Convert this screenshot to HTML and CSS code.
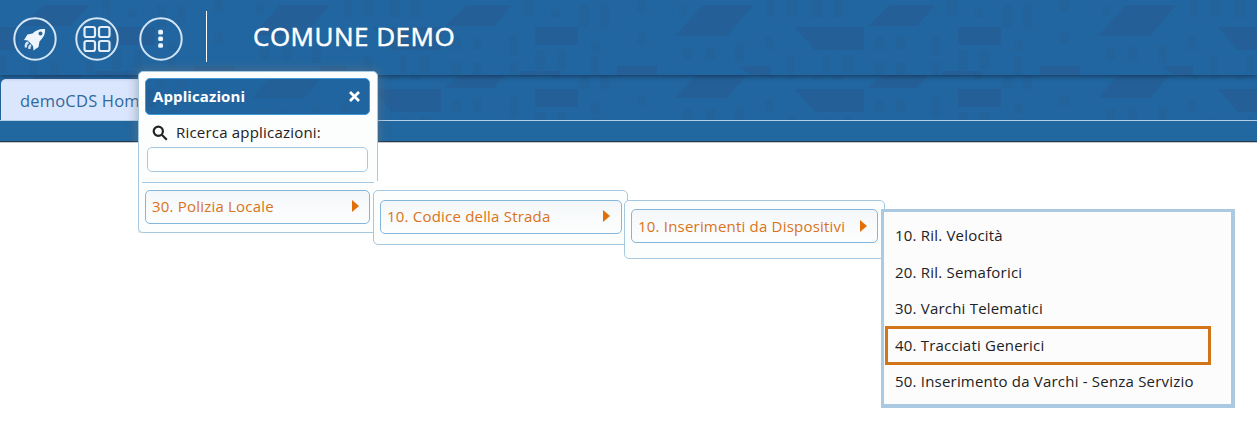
FILE: index.html
```
<!DOCTYPE html>
<html lang="it">
<head>
    <meta charset="UTF-8">
    <meta name="viewport" content="width=device-width, initial-scale=1.0">
    <title>Comune Demo</title>
    <link rel="stylesheet" href="styles.css">
</head>
<body>
    <!-- city pattern shared by the header, the tab bar and the menu title -->
    <svg class="defs" width="0" height="0">
        <defs>
            <g id="city">
                <path d="M675 36H727L753 5H703ZM795 27H864V50H815ZM868 26H917L935 5H890ZM740 66H770V75H750ZM617 66H657V75H617ZM958 27H1001V45H958ZM942 71H983V75H942Z"/>
                <path class="windows" d="M580 5h9v22h-9zM600 5h9v22h-9zM591 41h9v10h-9zM591 56h8v19h-8zM637 0h9v12h-9zM637 33h9v11h-9zM679 5h8v10h-8zM683 47h9v13h-9zM705 47h10v13h-10zM735 45h9v18h-9zM767 0h8v17h-8zM787 0h10v17h-10zM812 0h11v18h-11zM833 0h10v18h-10zM765 37h8v13h-8zM787 55h8v18h-8zM823 55h7v18h-7zM843 55h10v18h-10zM875 37h9v13h-9zM896 37h9v13h-9zM875 62h9v13h-9zM896 62h9v13h-9zM932 35h8v21h-8zM932 62h8v13h-8zM947 0h10v15h-10zM974 9h9v9h-9zM958 50h10v20h-10zM980 50h9v20h-9z"/>
            </g>
            <g id="skyline">
                <use href="#city" x="-846"/>
                <use href="#city" x="-423"/>
                <use href="#city"/>
                <use href="#city" x="423"/>
            </g>
        </defs>
    </svg>

    <header class="header">
        <svg class="skyline" width="1257" height="75"><use href="#skyline"/></svg>
        <div class="tools">
            <svg class="tool" width="44" height="44" viewBox="0 0 44 44">
                <circle class="ring" cx="22" cy="22" r="20.7"/>
                <path class="fill" d="M32 12c-5-.5-9 1-12.500 4.500l-5 1-3.500 5.500 4 .5 5 5.500.5 4.500 5-3.500 1-5.500C30.500 20.500 32.500 17 32 12zM27.500 14.500a2 2 0 1 1 0 4 2 2 0 0 1 0-4z" fill-rule="evenodd"/>
                <path class="flame" d="M15.500 25.500c-2 .5-3 2.500-2.500 5M18 28c-1 .5-2 1.500-1.500 4"/>
            </svg>
            <svg class="tool" width="44" height="44" viewBox="0 0 44 44">
                <circle class="ring" cx="22" cy="22" r="20.7"/>
                <g class="grid">
                    <rect x="9.500" y="10" width="10.500" height="10" rx="2"/>
                    <rect x="24" y="10" width="10.500" height="10" rx="2"/>
                    <rect x="9.500" y="24" width="10.500" height="10" rx="2"/>
                    <rect x="24" y="24" width="10.500" height="10" rx="2"/>
                </g>
            </svg>
            <svg class="tool" width="44" height="44" viewBox="0 0 44 44">
                <circle class="ring" cx="22" cy="22" r="20.7"/>
                <g class="fill">
                    <rect x="19.200" y="12.800" width="4.800" height="4.600" rx="1.500"/>
                    <rect x="19.200" y="19.500" width="4.800" height="4.600" rx="1.500"/>
                    <rect x="19.200" y="26.200" width="4.800" height="4.600" rx="1.500"/>
                </g>
            </svg>
        </div>
        <div class="divider"></div>
        <h1 class="title">COMUNE DEMO</h1>
    </header>

    <nav class="tabs">
        <svg class="skyline" width="1257" height="45"><use href="#skyline" y="-13"/></svg>
        <a class="tab">demoCDS Home</a>
    </nav>
    <div class="strip"></div>

    <div class="menu menu-apps">
        <div class="menu-title">
            <svg class="skyline" width="223" height="35"><use href="#skyline" x="-146" y="-17"/></svg>
            <span>Applicazioni</span>
            <svg class="close" width="13" height="13" viewBox="0 0 13 13"><path d="M2 2l9 9M11 2l-9 9"/></svg>
        </div>
        <label class="search-label" for="search">
            <svg class="lens" width="17" height="17" viewBox="0 0 17 17"><circle cx="6.300" cy="6.300" r="4.600"/><path d="M9.800 9.800l5 5"/></svg>
            <span>Ricerca applicazioni:</span>
        </label>
        <input class="search" id="search" type="text">
        <div class="separator"></div>
        <a class="item"><span>30. Polizia Locale</span><i class="arrow"></i></a>
    </div>

    <div class="menu menu-codice">
        <a class="item"><span>10. Codice della Strada</span><i class="arrow"></i></a>
    </div>

    <div class="menu menu-dispositivi">
        <a class="item"><span>10. Inserimenti da Dispositivi</span><i class="arrow"></i></a>
    </div>

    <div class="submenu">
        <a class="entry">10. Ril. Velocità</a>
        <a class="entry">20. Ril. Semaforici</a>
        <a class="entry">30. Varchi Telematici</a>
        <a class="entry selected">40. Tracciati Generici</a>
        <a class="entry">50. Inserimento da Varchi - Senza Servizio</a>
    </div>
</body>
</html>
```
FILE: styles.css
```
* {
    box-sizing: border-box;
}
body {
    margin: 0;
    height: 448px;
    overflow: hidden;
    position: relative;
    background-color: #fff;
    font-family: "Open Sans", sans-serif;
    font-size: 15px;
    letter-spacing: 0.2px;
    color: #222;
}
.defs {
    position: absolute;
}
.skyline {
    position: absolute;
    left: 0;
    top: 0;
    z-index: -1;
    fill: #255f95;
    opacity: 0.8;
}
.windows {
    opacity: 0.5;
}
.header {
    position: relative;
    z-index: 1;
    display: flex;
    height: 75px;
    padding-left: 13px;
    background-color: #2166a0;
    box-shadow: 0 1px 5px rgba(20, 40, 65, 0.75);
}
.tools {
    display: flex;
    padding-top: 17px;
}
.tool {
    margin-right: 18px;
}
.tool:nth-child(2) {
    margin-right: 20px;
}
.ring {
    fill: none;
    stroke: #d5e5f5;
    stroke-width: 2;
}
.fill {
    fill: #eef5fc;
}
.flame {
    fill: none;
    stroke: #d5e5f5;
    stroke-width: 2.400;
}
.grid {
    fill: none;
    stroke: #e4eefa;
    stroke-width: 2.200;
}
.divider {
    width: 1px;
    height: 51px;
    margin: 11px 0 0 5px;
    background-color: #fff;
}
.title {
    margin: 0 0 0 46px;
    font-size: 26px;
    font-weight: 500;
    line-height: 73px;
    letter-spacing: 0.500px;
    -webkit-text-stroke: 0.500px #fff;
    color: #fff;
}
.tabs {
    position: relative;
    z-index: 0;
    height: 46px;
    padding: 4px 0 0 1px;
    background-color: #2166a0;
    border-bottom: 1px solid #b5cfe6;
}
.tab {
    display: block;
    width: 160px;
    height: 41px;
    padding-left: 19px;
    border-radius: 5px 5px 0 0;
    background-color: #dae6fe;
    font-size: 16.500px;
    line-height: 43px;
    color: #30699c;
}
.strip {
    height: 22px;
    background-color: #2167a0;
    border-bottom: 1px solid #c3c9ce;
    box-shadow: inset 0 -1px #26384c;
}
.menu {
    position: absolute;
    z-index: 2;
    padding: 6px;
    border: 1px solid #a6c9e2;
    border-radius: 5px;
    background-color: #fcfdfd;
}
.menu-apps {
    left: 138px;
    top: 71px;
    width: 240px;
    height: 162px;
    box-shadow: 0 0 12px rgba(120, 120, 120, 0.6);
    clip-path: polygon(-15px -15px, 255px -15px, 255px 71px, 240px 71px, 240px 110px, 236px 110px, 236px 162px, 0 162px, 0 71px, -15px 71px);
}
.menu-codice {
    left: 373px;
    top: 190px;
    width: 255px;
    height: 55px;
    padding: 9px 5px 0 6px;
}
.menu-dispositivi {
    left: 624px;
    top: 200px;
    width: 261px;
    height: 59px;
    padding-top: 8px;
}
.menu-title {
    position: relative;
    z-index: 0;
    display: flex;
    justify-content: space-between;
    align-items: center;
    width: 225px;
    height: 37px;
    padding: 0 8px 1px 7px;
    border: 1px solid #4297d7;
    border-radius: 5px;
    overflow: hidden;
    background-color: #2166a0;
    font-weight: bold;
    letter-spacing: 0.1px;
    color: #fff;
}
.close {
    fill: none;
    stroke: #fff;
    stroke-width: 2.800;
}
.search-label {
    display: flex;
    align-items: center;
    height: 32px;
    padding: 1px 0 0 7px;
}
.lens {
    position: relative;
    top: 2px;
    margin-right: 7px;
    fill: none;
    stroke: #222;
    stroke-width: 2.200;
}
.search {
    display: block;
    width: 221px;
    height: 25px;
    margin-left: 2px;
    border: 1px solid #a6c9e2;
    border-radius: 5px;
    background-color: #fff;
}
.separator {
    height: 1px;
    margin: 10px -3px 7px;
    background-color: #a6c9e2;
}
.item {
    display: flex;
    justify-content: space-between;
    align-items: center;
    height: 34px;
    padding: 0 11px 2px 6px;
    border: 1px solid #84b6dc;
    border-radius: 5px;
    background: linear-gradient(#f4f7f9, #fdfefe);
    color: #d9741a;
}
.menu-apps .item {
    width: 225px;
    padding-right: 10px;
}
.menu-dispositivi .item {
    padding: 0 10px 0 6px;
}
.arrow {
    border: solid transparent;
    border-width: 6px 0 6px 7px;
    border-left-color: #e17009;
    margin-top: -1px;
}
.submenu {
    position: absolute;
    z-index: 3;
    left: 881px;
    top: 209px;
    width: 354px;
    height: 199px;
    padding-top: 5px;
    border: 3px solid #abcae1;
    border-width: 3px 4px 4px 3px;
    background-color: #fcfcfd;
}
.entry {
    display: block;
    width: 326px;
    height: 36.500px;
    margin-left: 1px;
    padding-left: 10px;
    line-height: 36.500px;
}
.selected {
    height: 39px;
    margin: -1px 0 -1.500px 1px;
    padding-left: 7px;
    border: 3px solid #d27519;
    line-height: 33px;
}
```
